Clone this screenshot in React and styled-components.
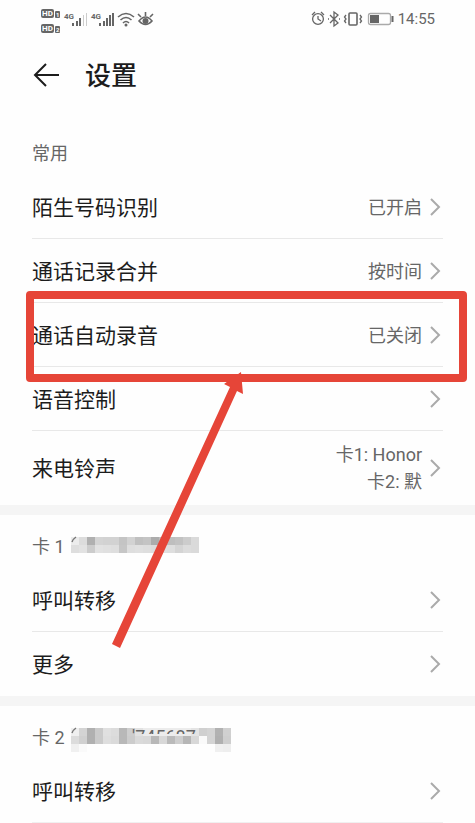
import React from 'react';
import styled, { createGlobalStyle } from 'styled-components';

const commonRows = [
  { label: '陌生号码识别', values: ['已开启'] },
  { label: '通话记录合并', values: ['按时间'] },
  { label: '通话自动录音', values: ['已关闭'], marked: true },
  { label: '语音控制' },
  { label: '来电铃声', values: ['卡1: Honor', '卡2: 默'], tall: true },
];

// grey levels of the mosaic, one array per row of blocks
const cardOneMosaic = [
  [236, 220, 176, 212, 210, 210, 196, 210, 192, 196, 172, 190, 190, 194, 204, 218],
  [222, 226, 204, 226, 224, 222, 198, 222, 224, 222, 220, 224, 222, 212, 220, 218],
];

const cardTwoMosaic = [
  [240, 212, 176, 202, 224, 220, 184, 206, 226, 236, 236, 236, 236, 236, 236, 228, 208, 212, 178, 208],
  [220, 208, 176, 202, 222, 218, 184, 204, 218, 216, 184, 216, 186, 206, 182, 216, 250, 212, 176, 206],
  [240, 250, 254, 254, 254, 254, 254, 254, 254, 254, 254, 254, 254, 254, 254, 254, 254, 254, 240, 238],
];

const Chevron = () => (
  <ChevronIcon viewBox="0 0 12 20" aria-hidden="true">
    <path d="M2 2 L10 10 L2 18" />
  </ChevronIcon>
);

const Mosaic = ({ rows, digits }) => (
  <MosaicBox width={rows[0].length * 8} height="32" aria-hidden="true">
    {rows.map((row, y) =>
      row.map((level, x) => (
        <rect
          key={`${y}-${x}`}
          x={x * 8}
          y={y * 8 + 8}
          width="8"
          height="8"
          fill={`rgb(${level}, ${level}, ${level})`}
        />
      ))
    )}
    <path d="M1 13 Q2 10 5 8" fill="none" stroke="#777" strokeWidth="1.5" />
    {digits && (
      <svg x="61" y="8" width="72" height="6">
        <text x="0" y="15" fontSize="18" fill="#666">{digits}</text>
      </svg>
    )}
  </MosaicBox>
);

const SettingRow = ({ label, values = [], tall, marked }) => (
  <Item>
    <RowButton type="button" $tall={tall}>
      <RowLabel>{label}</RowLabel>
      <RowValue>
        {values.map((value) => (
          <span key={value}>{value}</span>
        ))}
      </RowValue>
      <Chevron />
    </RowButton>
    {marked && (
      <Marker>
        <MarkerArrow viewBox="0 0 144 290" aria-hidden="true">
          <path d="M11 279 L129 22 L123 19 L140 7 L142 29 L136 26 L19 283 Z" />
        </MarkerArrow>
      </Marker>
    )}
  </Item>
);

const StatusBar = () => (
  <Status>
    <svg width="116" height="30" fill="#666" aria-hidden="true">
      {[7, 22].map((y, i) => (
        <g key={y} fontFamily="Roboto, sans-serif" fontWeight="700">
          <rect x="1" y={y - 2} width="13" height="9" rx="2" />
          <text x="2" y={y + 5} fontSize="8" fill="#fff">HD</text>
          <rect x="15" y={y} width="5" height="7" rx="1" />
          <text x="16" y={y + 6} fontSize="6" fill="#fff">{i + 1}</text>
        </g>
      ))}
      <text x="24" y="15" fontSize="8" fontWeight="700">4G</text>
      <path d="M32 19h2v3h-2zM36 17h2v5h-2zM39 14h2v8h-2z" />
      <path d="M43 11h1v11h-1zM46 9h1v13h-1z" fill="#ccc" />
      <text x="51" y="15" fontSize="8" fontWeight="700">4G</text>
      <path d="M59 19h2v3h-2zM63 17h2v5h-2zM66 14h2v8h-2zM69 11h2v11h-2zM72 9h2v13h-2z" />
      <g fill="none" stroke="#666" strokeWidth="1.6">
        <path d="M78 13 Q86 6 94 13M80.500 16 Q86 11 91.500 16M83 19 Q86 16 89 19" />
        <path d="M99 17 Q105.500 9 112 17 Q105.500 24 99 17Z" />
        <path d="M105.500 12V8M101 13L98 10M110 13L113 10" />
      </g>
      <circle cx="86" cy="21" r="1.500" />
      <circle cx="105.500" cy="17" r="3" />
    </svg>
    <StatusRight>
      <svg width="84" height="20" fill="none" stroke="#666" strokeWidth="1.3" aria-hidden="true">
        <circle cx="7" cy="10" r="5.400" />
        <path d="M7 7V10L10 12M1 6L4 3M10 3L13 6" />
        <path d="M19 6L27 14L23 17V3L27 6L19 14M17 10H18M28 10H29" />
        <rect x="38" y="4" width="8" height="12" rx="1" strokeWidth="1.600" />
        <path d="M35 6L33.500 8L35 10L33.500 12L35 14M49 6L50.500 8L49 10L50.500 12L49 14" />
        <rect x="57.500" y="4.500" width="22" height="11" rx="2" stroke="#aaa" />
        <rect x="59" y="6" width="9" height="8" fill="#666" stroke="none" />
        <path d="M81.500 7V13" strokeWidth="2" />
      </svg>
      <time>14:55</time>
    </StatusRight>
  </Status>
);

export default function App() {
  return (
    <Page>
      <GlobalStyle />
      <StatusBar />
      <TitleBar>
        <BackButton type="button" aria-label="返回">
          <svg width="26" height="26" viewBox="0 0 26 26" aria-hidden="true">
            <path d="M13 2 L2 13 L13 24 M2 13 H26" />
          </svg>
        </BackButton>
        <h1>设置</h1>
      </TitleBar>
      <main>
        <Section>
          <SectionTitle>常用</SectionTitle>
          <List>
            {commonRows.map((row) => (
              <SettingRow key={row.label} {...row} />
            ))}
          </List>
        </Section>
        <Section>
          <SectionTitle>
            卡 1 <Mosaic rows={cardOneMosaic} />
          </SectionTitle>
          <List>
            <SettingRow label="呼叫转移" />
            <SettingRow label="更多" />
          </List>
        </Section>
        <Section>
          <SectionTitle>
            卡 2 <Mosaic rows={cardTwoMosaic} digits="'745687" />
          </SectionTitle>
          <List $continues>
            <SettingRow label="呼叫转移" />
          </List>
        </Section>
      </main>
    </Page>
  );
}

const GlobalStyle = createGlobalStyle`
  * {
    box-sizing: border-box;
  }

  body {
    margin: 0;
    background: #fefefe;
    color: #1c1c1c;
    font-family: Roboto, 'Noto Sans CJK SC', sans-serif;
  }
`;

const Page = styled.div`
  width: 100%;
  overflow: hidden;
`;

const Status = styled.header`
  display: flex;
  align-items: center;
  justify-content: space-between;
  height: 38px;
  padding: 0 40px;
`;

const StatusRight = styled.div`
  display: flex;
  align-items: center;
  gap: 3px;
  font-size: 15px;
  line-height: 20px;
  color: #666;
`;

const TitleBar = styled.div`
  display: flex;
  align-items: center;
  gap: 26px;
  height: 74px;
  margin-bottom: 10px;
  padding: 0 33px;

  h1 {
    margin: 0;
    padding-top: 2px;
    font-size: 26px;
    font-weight: 500;
    line-height: 32px;
  }
`;

const BackButton = styled.button`
  display: flex;
  padding: 0;
  border: none;
  background: none;
  cursor: pointer;

  path {
    fill: none;
    stroke: #1c1c1c;
    stroke-width: 2;
  }
`;

const Section = styled.section`
  & + & {
    border-top: 10px solid #f5f5f5;
  }
`;

const SectionTitle = styled.h2`
  display: flex;
  align-items: center;
  gap: 6px;
  height: 53px;
  margin: 0;
  padding: 7px 32px 0;
  font-size: 18px;
  font-weight: 400;
  color: #666;
`;

const MosaicBox = styled.svg`
  flex: none;
`;

const Item = styled.li`
  position: relative;
  border-bottom: 1px solid #e8e8e8;
`;

const List = styled.ul`
  margin: 0;
  padding: 0 32px;
  list-style: none;

  ${Item}:last-child {
    border-bottom-color: ${({ $continues }) => ($continues ? '#f0f0f0' : 'transparent')};
  }
`;

const RowButton = styled.button`
  display: flex;
  align-items: center;
  width: 100%;
  height: ${({ $tall }) => ($tall ? '73px' : '63px')};
  padding: 0 2px 0 0;
  border: none;
  background: none;
  color: inherit;
  font: inherit;
  text-align: left;
  cursor: pointer;
`;

const RowLabel = styled.span`
  flex: 1;
  padding-top: 2px;
  font-size: 21px;
  line-height: 28px;
`;

const RowValue = styled.span`
  display: flex;
  flex-direction: column;
  margin-right: 7px;
  padding-top: 1px;
  font-size: 18px;
  line-height: 27px;
  text-align: right;
  color: #666;
`;

const ChevronIcon = styled.svg`
  width: 12px;
  height: 20px;
  fill: none;
  stroke: #aaa;
  stroke-width: 2;
`;

const Marker = styled.div`
  position: absolute;
  z-index: 1;
  inset: -12px -24px -16px -6px;
  border: 8px solid #e64538;
  border-radius: 4px;
  pointer-events: none;
`;

const MarkerArrow = styled.svg`
  position: absolute;
  top: 66px;
  left: 67px;
  width: 144px;
  height: 290px;
  overflow: visible;
  fill: #e64538;
`;
